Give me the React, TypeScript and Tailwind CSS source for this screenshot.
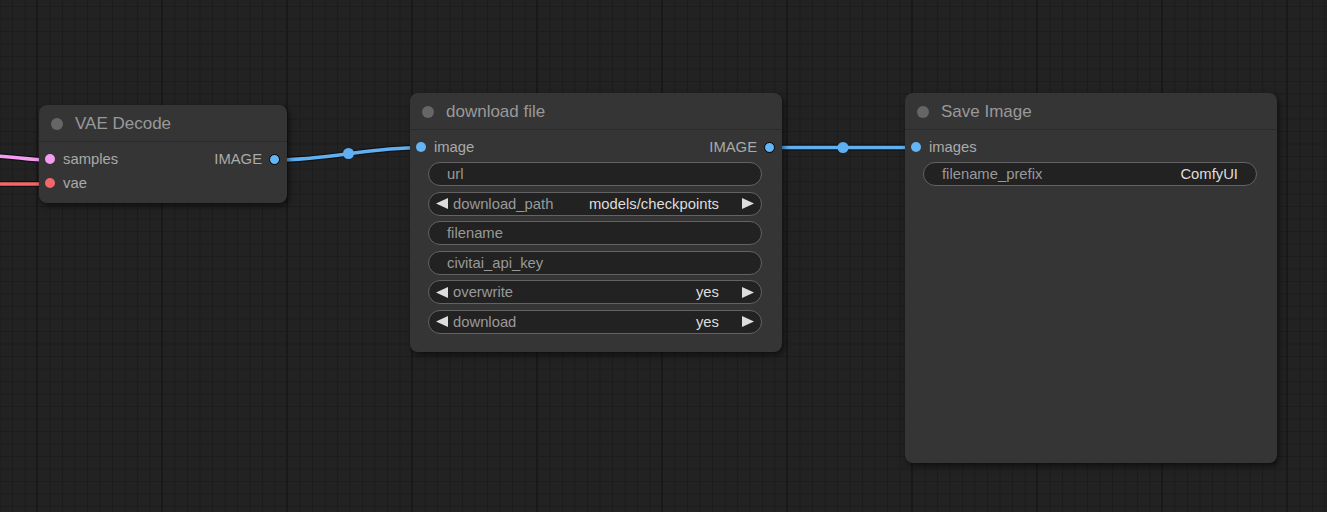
import type { ReactNode } from "react";

const font = "font-['Liberation_Sans',Arial,sans-serif]";

function Arrow({ dir }: { dir: "left" | "right" }) {
  return (
    <svg width="12" height="11" viewBox="0 0 12 11" className="shrink-0">
      {dir === "left" ? <polygon points="12,0 12,11 0,5.5" fill="#dddddd" /> : <polygon points="0,0 0,11 12,5.5" fill="#dddddd" />}
    </svg>
  );
}

function TextWidget({ label, value }: { label: string; value?: string }) {
  return (
    <div className="flex h-6 items-center rounded-full border border-[#636363] bg-[#222222] pl-[18px] pr-[18px] pt-[1px] text-[14.8px] leading-none">
      <span className="text-[#999999]">{label}</span>
      {value && <span className="ml-auto text-[#dddddd]">{value}</span>}
    </div>
  );
}

function ComboWidget({ label, value }: { label: string; value: string }) {
  return (
    <div className="flex h-6 items-center rounded-full border border-[#636363] bg-[#222222] pl-[7px] pr-[7px] text-[14.8px] leading-none">
      <Arrow dir="left" />
      <span className="ml-[5px] pt-[1px] text-[#999999]">{label}</span>
      <span className="ml-auto pt-[1px] text-[#dddddd]">{value}</span>
      <span className="ml-[23px] flex">
        <Arrow dir="right" />
      </span>
    </div>
  );
}

function InSlot({ label, color }: { label: string; color: string }) {
  return (
    <div className="flex h-6 items-center gap-[8px] pl-[6px]">
      <span className={`h-[10px] w-[10px] rounded-full ${color}`} />
      <span className="text-[14.8px] leading-none text-[#aaaaaa]">{label}</span>
    </div>
  );
}

function OutSlot({ label }: { label: string }) {
  return (
    <div className="flex h-6 items-center gap-[7px] pr-[7px]">
      <span className="text-[14.8px] leading-none text-[#aaaaaa]">{label}</span>
      <span className="h-[11px] w-[11px] rounded-full border border-black bg-[#64b5f6]" />
    </div>
  );
}

function Node({ className, title, children }: { className: string; title: string; children: ReactNode }) {
  return (
    <div className={`absolute flex flex-col rounded-[8px] bg-[#353535] shadow-[2px_3px_6px_rgba(0,0,0,0.55)] ${className}`}>
      <div className="flex h-[37px] shrink-0 items-center gap-[12px] border-b border-[#2b2b2b] pl-[12px] pt-[1px]">
        <span className="h-3 w-3 rounded-full bg-[#666666]" />
        <span className="text-[17px] leading-none text-[#999999]">{title}</span>
      </div>
      {children}
    </div>
  );
}

export default function App() {
  return (
    <div
      className={`relative h-[512px] w-full overflow-hidden bg-[#222222] bg-[linear-gradient(to_right,#191919_2px,transparent_2px),linear-gradient(to_right,#1c1c1c_1px,transparent_1px),linear-gradient(to_bottom,#1c1c1c_1px,transparent_1px)] bg-[size:125px_125px,12.5px_12.5px,12.5px_12.5px] bg-[position:36px_0,12px_0,0_6px] ${font}`}
    >
      <svg className="absolute inset-0" width="1327" height="512">
        <path d="M -10 156 C 15 156, 25 160, 50 160" stroke="rgba(0,0,0,0.45)" strokeWidth="6" fill="none" />
        <path d="M -10 156 C 15 156, 25 160, 50 160" stroke="#f59cf2" strokeWidth="3.5" fill="none" />
        <path d="M -10 184 L 50 184" stroke="rgba(0,0,0,0.45)" strokeWidth="6" fill="none" />
        <path d="M -10 184 L 50 184" stroke="#f26868" strokeWidth="3.5" fill="none" />

        <path d="M 275 160 C 330 160, 367 147.5, 422 147.5" stroke="rgba(0,0,0,0.45)" strokeWidth="6" fill="none" />
        <path d="M 275 160 C 330 160, 367 147.5, 422 147.5" stroke="#5fb0f2" strokeWidth="3.5" fill="none" />
        <circle cx="348.5" cy="153.5" r="5.5" fill="#5fb0f2" />

        <path d="M 769 147.5 L 917 147.5" stroke="rgba(0,0,0,0.45)" strokeWidth="6" fill="none" />
        <path d="M 769 147.5 L 917 147.5" stroke="#5fb0f2" strokeWidth="3.5" fill="none" />
        <circle cx="843" cy="147.5" r="5.5" fill="#5fb0f2" />
      </svg>

      <Node className="left-[39px] top-[105px] h-[98px] w-[248px]" title="VAE Decode">
        <div className="flex pt-[5px]">
          <div className="flex flex-col">
            <InSlot label="samples" color="bg-[#f59cf2]" />
            <InSlot label="vae" color="bg-[#f26868]" />
          </div>
          <div className="ml-auto">
            <OutSlot label="IMAGE" />
          </div>
        </div>
      </Node>

      <Node className="left-[410px] top-[93px] h-[259px] w-[372px]" title="download file">
        <div className="flex pt-[5px]">
          <InSlot label="image" color="bg-[#64b5f6]" />
          <div className="ml-auto">
            <OutSlot label="IMAGE" />
          </div>
        </div>
        <div className="ml-[18px] mr-[20px] mt-[3px] flex flex-col gap-[5.6px]">
          <TextWidget label="url" />
          <ComboWidget label="download_path" value="models/checkpoints" />
          <TextWidget label="filename" />
          <TextWidget label="civitai_api_key" />
          <ComboWidget label="overwrite" value="yes" />
          <ComboWidget label="download" value="yes" />
        </div>
      </Node>

      <Node className="left-[905px] top-[93px] h-[370px] w-[372px]" title="Save Image">
        <div className="flex pt-[5px]">
          <InSlot label="images" color="bg-[#64b5f6]" />
        </div>
        <div className="ml-[18px] mr-[20px] mt-[3px] flex flex-col">
          <TextWidget label="filename_prefix" value="ComfyUI" />
        </div>
      </Node>
    </div>
  );
}
